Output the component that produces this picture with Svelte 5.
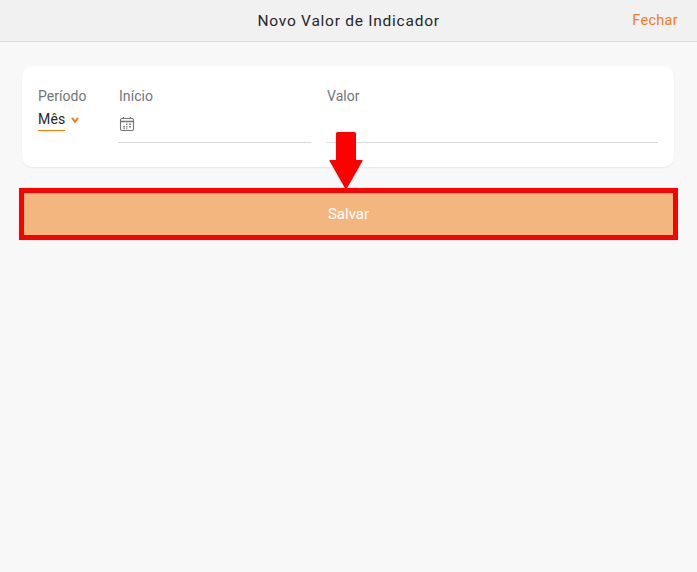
<script lang="ts">
  let periodo = "Mês";
</script>

<div class="page">
  <header class="bar">
    <span class="side"></span>
    <h1>Novo Valor de Indicador</h1>
    <button class="close">Fechar</button>
  </header>

  <main class="content">
    <section class="card">
      <div class="field period">
        <span class="label">Período</span>
        <div class="select">
          <div class="current">
            <span>{periodo}</span>
            <i class="line"></i>
          </div>
          <svg class="chev" viewBox="0 0 8 6" width="8" height="6" aria-hidden="true">
            <path d="M1 0.8 L4 4.8 L7 0.8" fill="none" stroke="#f57c1f" stroke-width="2.1" />
          </svg>
        </div>
      </div>
      <div class="field start">
        <span class="label">Início</span>
        <div class="input">
          <svg viewBox="0 0 16 16" width="16" height="16" aria-hidden="true">
            <rect x="1.5" y="2.5" width="13" height="12" rx="1.5" fill="none" stroke="#777" stroke-width="1.1" />
            <path d="M1.5 5.5 H14.5 M4.5 1 V3 M11.5 1 V3" stroke="#777" stroke-width="1.3" fill="none" />
            <path d="M7 7.5h1.5v1.5H7zM10 7.5h2v1.5h-2zM4 10h2v1.5H4zM7 10h1.5v1.5H7zM10 10h2v1.5h-2zM4 12.2h2v1H4zM7 12.2h1.5v1H7z" fill="#888" />
          </svg>
        </div>
      </div>
      <div class="field value">
        <span class="label">Valor</span>
        <div class="input"></div>
      </div>
    </section>

    <div class="action">
      <button class="save">Salvar</button>
      <svg class="arrow" viewBox="0 0 34 58" width="34" height="58" aria-hidden="true">
        <path d="M7 1.5 Q7 0 8.5 0 H25.5 Q27 0 27 1.5 V28 H33 Q34 28 33.5 29 L17 58 L0.5 29 Q0 28 1 28 H7 Z" fill="#ff0000" />
      </svg>
    </div>
  </main>
</div>

<style>
  :global(body) {
    margin: 0;
    background: #f8f8f8;
  }
  .page {
    height: 572px;
    background: #f8f8f8;
    font-family: Roboto, "Liberation Sans", sans-serif;
    overflow: hidden;
  }
  .bar {
    height: 41px;
    display: flex;
    align-items: center;
    justify-content: space-between;
    padding: 0 19px 0 0;
    background: #f1f1f1;
    border-bottom: 1px solid #d9d9d9;
  }
  .side {
    width: 65px;
  }
  h1 {
    margin: 0;
    font-size: 15.5px;
    font-weight: 450;
    letter-spacing: 0.75px;
    color: #24262b;
  }
  .close {
    border: 0;
    padding: 0;
    background: none;
    font: inherit;
    font-size: 14.5px;
    letter-spacing: 0.3px;
    color: #f57c1f;
  }
  .content {
    padding: 24px 23px 0 22px;
  }
  .card {
    height: 101px;
    box-sizing: border-box;
    display: flex;
    padding: 21px 16px 0;
    background: #fff;
    border-radius: 10px;
    box-shadow: 0 1px 2px rgba(0, 0, 0, 0.07);
  }
  .field {
    display: flex;
    flex-direction: column;
  }
  .label {
    font-size: 14px;
    line-height: 18px;
    letter-spacing: 0.05px;
    color: #70757c;
  }
  .period {
    width: 80px;
    flex: none;
  }
  .select {
    display: flex;
    align-items: flex-start;
    gap: 6px;
    margin-top: 5px;
  }
  .current {
    width: 27px;
    font-size: 14px;
    line-height: 19px;
    letter-spacing: 0.2px;
    color: #24262b;
  }
  .line {
    display: block;
    height: 1px;
    margin-top: 1px;
    background: #f57c00;
  }
  .chev {
    margin-top: 7px;
  }
  .start {
    width: 193px;
    flex: none;
    margin-right: 16px;
  }
  .start .label,
  .start .input {
    padding-left: 1px;
  }
  .value {
    flex: 1;
  }
  .input {
    height: 38px;
    box-sizing: border-box;
    display: flex;
    align-items: center;
    border-bottom: 1px solid #d9d9d9;
  }
  .action {
    position: relative;
    margin-top: 26px;
    padding: 0 1px 0 2px;
  }
  .save {
    display: block;
    width: 100%;
    height: 42px;
    border: 0;
    background: #f4b67f;
    outline: 5px solid #ff0000;
    font: inherit;
    font-size: 15px;
    font-weight: 450;
    color: #fff;
  }
  .arrow {
    position: absolute;
    left: 307px;
    top: -61px;
  }
</style>
